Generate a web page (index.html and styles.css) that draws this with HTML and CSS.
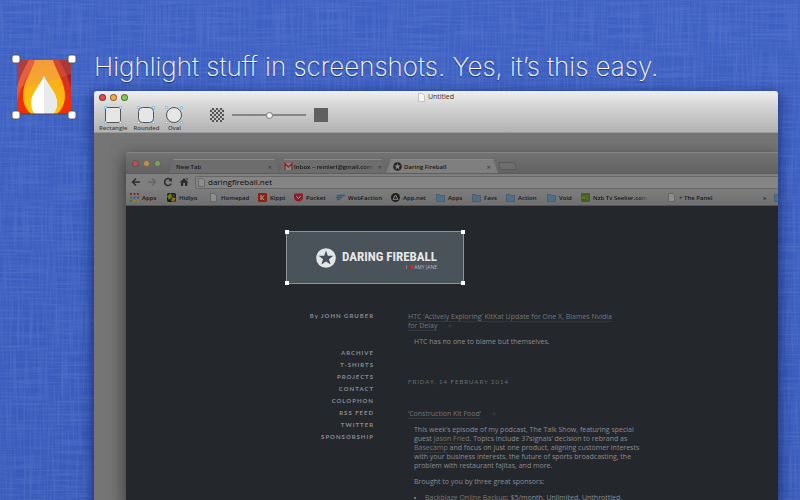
FILE: index.html
```html
<!DOCTYPE html>
<html lang="en">
<head>
<meta charset="utf-8">
<title>Highlight stuff in screenshots</title>
<meta name="viewport" content="width=device-width, initial-scale=1">
<link rel="stylesheet" href="styles.css">
</head>
<body>
<svg class="fabric" aria-hidden="true" preserveAspectRatio="none">
  <filter id="weft" x="0" y="0" width="100%" height="100%"><feTurbulence type="fractalNoise" baseFrequency="0.02 0.5" numOctaves="2" seed="3"/><feColorMatrix values="0 0 0 0 0.6  0 0 0 0 0.75  0 0 0 0 1  2 0 0 0 -0.8"/></filter>
  <filter id="warp" x="0" y="0" width="100%" height="100%"><feTurbulence type="fractalNoise" baseFrequency="0.5 0.02" numOctaves="2" seed="8"/><feColorMatrix values="0 0 0 0 0.6  0 0 0 0 0.75  0 0 0 0 1  2 0 0 0 -0.8"/></filter>
  <rect width="100%" height="100%" filter="url(#weft)"/>
  <rect width="100%" height="100%" filter="url(#warp)"/>
</svg>
<main class="page">
  <svg class="app-icon" viewBox="0 0 66 66" role="img" aria-label="App icon">
    <defs>
      <clipPath id="sq"><rect x="6" y="6" width="54" height="54"/></clipPath>
      <linearGradient id="gold" x1="0" y1="0" x2="0" y2="1"><stop offset="0" stop-color="#f9a22c"/><stop offset="1" stop-color="#ffc400"/></linearGradient>
    </defs>
    <g clip-path="url(#sq)">
      <rect x="6" y="6" width="54" height="54" fill="#ee3008"/>
      <path d="M6 6h17Q9 19 6 34z" fill="#9c2a34"/>
      <path d="M60 6H43q14 13 17 28z" fill="#9c2228"/>
      <path d="M18 6Q9 21 6 34v14q3-16 20-42z" fill="#e9552f"/>
      <path d="M48 6Q57 21 60 34v14Q57 32 40 6z" fill="#cf3426"/>
      <path d="M24 6C21 17 12 28 12 42q0 11 8 18h26q8-7 8-18C54 28 45 17 42 6z" fill="url(#gold)"/>
      <path d="M6 33Q36 30 60 20V6H6z" fill="#e08a70" opacity=".22"/>
      <path d="M33 22C28 33 20 39 20 49q0 7 4 11h18q4-4 4-11C46 39 38 33 33 22z" fill="#fff"/>
      <path d="M33 22v38h9q4-4 4-11C46 39 38 33 33 22z" fill="#e9eaec"/>
    </g>
    <path d="M7 60h52" stroke="#4b4650" stroke-width="1"/>
    <g fill="#fff" stroke="#555a66" stroke-width="1"><rect x="1" y="1" width="8" height="8" rx="2"/><rect x="57" y="1" width="8" height="8" rx="2"/><rect x="1" y="57" width="8" height="8" rx="2"/><rect x="57" y="57" width="8" height="8" rx="2"/></g>
  </svg>
  <h1>Highlight stuff in screenshots. Yes, it’s this easy.</h1>
  <section class="window" aria-label="Untitled">
    <header class="window-bar">
      <div class="title-row">
        <div class="lights"><button class="light red" aria-label="Close"></button><button class="light amber" aria-label="Minimize"></button><button class="light green" aria-label="Zoom"></button></div>
        <h2><svg class="doc" viewBox="0 0 7 9" aria-hidden="true"><path d="M.5.5h4l2 2v6h-6z"/></svg>Untitled</h2>
      </div>
      <div class="tools">
        <button class="tool"><svg viewBox="0 0 18 18" aria-hidden="true"><rect class="shape" x="1.5" y="1.5" width="15" height="15"/><g class="dots"><circle cx="1.5" cy="1.5" r="1.2"/><circle cx="16.5" cy="1.5" r="1.2"/><circle cx="1.5" cy="16.5" r="1.2"/><circle cx="16.5" cy="16.5" r="1.2"/></g></svg>Rectangle</button>
        <button class="tool"><svg viewBox="0 0 18 18" aria-hidden="true"><rect class="shape" x="1.5" y="1.5" width="15" height="15" rx="4"/><g class="dots"><circle cx="1.5" cy="1.5" r="1.2"/><circle cx="16.5" cy="1.5" r="1.2"/><circle cx="1.5" cy="16.5" r="1.2"/><circle cx="16.5" cy="16.5" r="1.2"/></g></svg>Rounded</button>
        <button class="tool"><svg viewBox="0 0 18 18" aria-hidden="true"><circle class="shape" cx="9" cy="9" r="7.5"/><g class="dots"><circle cx="1.5" cy="1.5" r="1.2"/><circle cx="16.5" cy="1.5" r="1.2"/><circle cx="1.5" cy="16.5" r="1.2"/><circle cx="16.5" cy="16.5" r="1.2"/></g></svg>Oval</button>
        <div class="opacity">
          <span class="checker"></span>
          <input type="range" min="0" max="100" value="50" aria-label="Dim opacity">
          <span class="solid"></span>
        </div>
      </div>
    </header>
    <div class="canvas">
      <div class="browser">
        <div class="tab-strip">
          <div class="lights"><button class="light red" aria-label="Close"></button><button class="light amber" aria-label="Minimize"></button><button class="light green" aria-label="Zoom"></button></div>
          <button class="tab first"><span>New Tab</span><i>×</i></button>
          <button class="tab second"><svg viewBox="0 0 9 8" aria-hidden="true"><rect x=".5" y=".5" width="8" height="7" fill="#888"/><path d="M1 7.500V1l3.500 3.500L8 1v6.500" fill="none" stroke="#8e2520" stroke-width="1.300"/></svg><span class="fade">Inbox – reinierl@gmail.com</span><i>×</i></button>
          <button class="tab active"><svg viewBox="0 0 9 9" aria-hidden="true"><circle cx="4.500" cy="4.500" r="4.300" fill="#222529"/><path d="M4.500 1.200l.8 2.300h2.400l-1.900 1.500.7 2.400-2-1.400-2 1.400.7-2.400-1.900-1.500h2.400z" fill="#8a8a8a"/></svg><span>Daring Fireball</span><i>×</i></button>
          <button class="new-tab" aria-label="Open new tab"></button>
        </div>
        <div class="nav">
          <button aria-label="Back"><svg viewBox="0 0 10 10"><path d="M9 5H2M5 1.500L1.500 5 5 8.500" class="ink"/></svg></button>
          <button aria-label="Forward" class="off"><svg viewBox="0 0 10 10"><path d="M1 5h7M5 1.500L8.500 5 5 8.500" class="ink"/></svg></button>
          <button aria-label="Reload"><svg viewBox="0 0 10 10"><path d="M8.300 6.500A3.500 3.500 0 1 1 7.500 2.500" class="ink"/><path d="M5.500 4.200H9V.7z" fill="#2e2e2e"/></svg></button>
          <button aria-label="Home"><svg viewBox="0 0 10 10"><path d="M5 1l4.500 4.500H8.300V9H6V6H4.200v3H2V5.500H.5zM7 1h1.500v3z" fill="#2e2e2e"/></svg></button>
          <label class="address"><svg class="doc" viewBox="0 0 7 9" aria-hidden="true"><path d="M.5.5h4l2 2v6h-6z"/></svg><input type="text" value="daringfireball.net" aria-label="Address"></label>
        </div>
        <nav class="bookmarks">
          <a href="#"><svg viewBox="0 0 9 9"><g fill="#8b2a25"><path d="M0 0h2v2H0zM3.500 0h2v2h-2zM7 0h2v2H7z"/></g><path d="M0 3.500h2v2H0zM0 7h2v2H0z" fill="#2f7a40"/><path d="M3.500 3.500h2v2h-2zM7 3.500h2v2H7z" fill="#2e5f94"/><path d="M3.500 7h2v2h-2zM7 7h2v2H7z" fill="#a08020"/></svg>Apps</a>
          <a href="#"><svg viewBox="0 0 9 9"><rect width="9" height="9" rx="2" fill="#191b12"/><path d="M0 3l4-3 1 4-3 3z" fill="#6d7d18"/><path d="M5 4l4 1-2 4-3-1z" fill="#8c6b18"/><path d="M5 1l3 1-1 2z" fill="#2c6a3a"/></svg>Hidiyo</a>
          <a href="#"><svg class="doc" viewBox="0 0 7 9"><path d="M.5.5h4l2 2v6h-6z"/></svg>Homepad</a>
          <a href="#"><svg viewBox="0 0 9 9"><rect width="9" height="9" rx="1" fill="#8e1f10"/><path d="M3 2v5M6.300 2.500L3.500 4.800 6.300 7" stroke="#aaa" fill="none"/></svg>Kippt</a>
          <a href="#"><svg viewBox="0 0 9 9"><path d="M1 .5h7q1 0 1 1V4q0 4-4.500 4.500Q0 8 0 4V1.500q0-1 1-1z" fill="#8e1a2c"/><path d="M2.300 3.200l2.200 2.100 2.200-2.100" stroke="#aaa" fill="none"/></svg>Pocket</a>
          <a href="#"><svg viewBox="0 0 9 9"><path d="M1 2.500h8M0 4.500h6M1 6.500h3" stroke="#285a86" stroke-width="1.300"/></svg>WebFaction</a>
          <a href="#"><svg viewBox="0 0 9 9"><circle cx="4.500" cy="4.500" r="4.500" fill="#202020"/><path d="M2 6.300L4.500 2 7 6.300z" fill="none" stroke="#888"/></svg>App.net</a>
          <a href="#"><svg class="folder" viewBox="0 0 9 9"><path d="M.5 1.500h3l1 1h4v6h-8z"/></svg>Apps</a>
          <a href="#"><svg class="folder" viewBox="0 0 9 9"><path d="M.5 1.500h3l1 1h4v6h-8z"/></svg>Favs</a>
          <a href="#"><svg class="folder" viewBox="0 0 9 9"><path d="M.5 1.500h3l1 1h4v6h-8z"/></svg>Action</a>
          <a href="#"><svg class="folder" viewBox="0 0 9 9"><path d="M.5 1.500h3l1 1h4v6h-8z"/></svg>Void</a>
          <a href="#"><svg viewBox="0 0 9 9"><rect width="9" height="9" rx="1" fill="#42611a"/><path d="M1.500 6V3l2 3V3M5 3h2L5 6h2" stroke="#668436" fill="none" stroke-width=".7"/></svg><span class="fade">Nzb Tv Seeker.com</span></a>
          <a href="#"><svg class="doc" viewBox="0 0 7 9"><path d="M.5.5h4l2 2v6h-6z"/></svg>+ The Panel</a>
          <a href="#">»</a>
          <a href="#" aria-label="More"><svg class="folder" viewBox="0 0 9 9"><path d="M.5 1.500h3l1 1h4v6h-8z"/></svg></a>
        </nav>
        <div class="site">
          <div class="selection">
            <svg class="star" viewBox="0 0 20 20" aria-hidden="true"><circle cx="10" cy="10" r="9.800" fill="#e4e5e6"/><path d="M10 2.500l1.800 5.300h5.600L13 11.200l1.600 5.400L10 13.400l-4.600 3.200L7 11.200 2.600 7.800h5.600z" fill="#485059"/></svg>
            <div class="wordmark"><strong>DARING FIREBALL</strong><small>I <b>♥</b> AMY JANE</small></div>
            <span class="handle nw"></span><span class="handle ne"></span><span class="handle sw"></span><span class="handle se"></span>
          </div>
          <div class="columns">
            <aside>
              <p>By JOHN GRUBER</p>
              <ul><li><a href="#">ARCHIVE</a></li><li><a href="#">T-SHIRTS</a></li><li><a href="#">PROJECTS</a></li><li><a href="#">CONTACT</a></li><li><a href="#">COLOPHON</a></li><li><a href="#">RSS FEED</a></li><li><a href="#">TWITTER</a></li><li><a href="#">SPONSORSHIP</a></li></ul>
            </aside>
            <article>
              <h3><a href="#">HTC ‘Actively Exploring’ KitKat Update for One X, Blames Nvidia<br>for Delay</a><span>★</span></h3>
              <div class="entry"><p>HTC has no one to blame but themselves.</p></div>
              <h4>FRIDAY, 14 FEBRUARY 2014</h4>
              <h3><a href="#">‘Construction Kit Food’</a><span>★</span></h3>
              <div class="entry">
                <p>This week’s episode of my podcast, The Talk Show, featuring special<br>guest <a href="#">Jason Fried</a>. Topics include 37signals’ decision to rebrand as<br><a href="#">Basecamp</a> and focus on just one product, aligning customer interests<br>with your business interests, the future of sports broadcasting, the<br>problem with restaurant fajitas, and more.</p>
                <p>Brought to you by three great sponsors:</p>
                <ul><li><a href="#">Backblaze Online Backup</a>: $5/month. Unlimited. Unthrottled.</li></ul>
              </div>
            </article>
          </div>
        </div>
      </div>
    </div>
  </section>
</main>
</body>
</html>
```
FILE: styles.css
```css
* { box-sizing: border-box; }
body {
  margin: 0;
  height: 100vh;
  overflow: hidden;
  position: relative;
  background: linear-gradient(#3d60c3, #395aba);
  font-family: "Open Sans", "Noto Sans", sans-serif;
}
h1, h2, h3, h4, p, ul { margin: 0; padding: 0; font-weight: inherit; }
button {
  border: 0;
  padding: 0;
  background: none;
  font: inherit;
  color: inherit;
}
a { color: inherit; text-decoration: none; }
svg { display: block; flex: none; }
.fabric {
  position: absolute;
  inset: 0;
  width: 100%;
  height: 100%;
  opacity: 0.13;
}
.page {
  position: relative;
  height: 100%;
  display: grid;
  grid-template-columns: 94px minmax(0, 1fr);
  grid-template-rows: auto minmax(0, 1fr);
  padding-right: 22px;
}
.app-icon {
  grid-row: 1 / 3;
  width: 66px;
  height: 66px;
  margin: 54px 0 0 11px;
}
h1 {
  margin: 49px 0 6px;
  font: 200 26px/36px Inter, "Liberation Sans", sans-serif;
  color: #fff;
  white-space: nowrap;
  text-shadow: 0 1px 1px #1a2f78;
}
.window {
  display: flex;
  flex-direction: column;
  border-radius: 3px 3px 0 0;
  box-shadow: 0 4px 12px 3px rgba(10, 25, 90, 0.6);
}
.window-bar {
  padding: 0 5px;
  height: 42px;
  border-radius: 3px 3px 0 0;
  border-bottom: 1px solid #999;
  background: linear-gradient(#efefef, #d6d6d6 35%, #b2b2b2);
  color: #444;
}
.title-row {
  display: grid;
  grid-template-columns: 1fr auto 1fr;
  align-items: center;
  height: 12px;
}
.lights { display: flex; gap: 4px; }
.light {
  width: 7px;
  height: 7px;
  border-radius: 50%;
  border: 1px solid rgba(50, 30, 20, 0.5);
}
.red { background: #e14a4d; }
.amber { background: #eeae45; }
.green { background: #83c660; }
h2 {
  display: flex;
  align-items: center;
  gap: 3px;
  font-size: 7px;
  line-height: 12px;
  color: #333;
}
.doc { width: 7px; height: 9px; fill: #f4f4f4; stroke: #aaa; stroke-width: 0.6; }
.tools { display: flex; gap: 6px; padding-top: 3px; }
.tool {
  display: flex;
  flex-direction: column;
  align-items: center;
  font-size: 6px;
  font-weight: 600;
  line-height: 8px;
}
.tool svg { width: 18px; height: 18px; }
.shape { fill: #e6e6e6; stroke: #555; }
.dots { fill: #fff; stroke: #4aa5de; stroke-width: 0.8; }
.opacity {
  display: flex;
  align-items: center;
  gap: 8px;
  height: 18px;
  margin-left: 21px;
}
.checker {
  width: 14px;
  height: 14px;
  background: repeating-conic-gradient(#555 0 25%, #c4c4c4 0 50%) 0 0 / 4px 4px;
}
.solid { width: 14px; height: 14px; background: #606060; }
.opacity input {
  appearance: none;
  width: 74px;
  height: 8px;
  margin: 0;
  background: linear-gradient(#858585, #858585) center / 100% 2px no-repeat;
}
.opacity input::-webkit-slider-thumb {
  appearance: none;
  width: 7px;
  height: 7px;
  border: 1px solid #777;
  border-radius: 50%;
  background: #f4f4f4;
}
.canvas {
  flex: 1;
  min-height: 0;
  padding: 19px 0 0 32px;
  overflow: hidden;
  background: #757575;
}
.browser {
  height: 100%;
  display: flex;
  flex-direction: column;
  border-radius: 3px 0 0 0;
  box-shadow: 0 6px 16px 2px rgba(0, 0, 0, 0.5);
  background: #7c7c7c;
  color: #161616;
}
.tab-strip {
  display: flex;
  align-items: flex-end;
  height: 22px;
  padding-left: 6px;
  border-top: 1px solid #858585;
  border-bottom: 1px solid #5c5c5c;
  border-radius: 3px 0 0 0;
  background: linear-gradient(#727272, #626262);
  font-size: 6px;
  font-weight: 600;
}
.browser .light { opacity: 0.6; }
.tab-strip .lights { align-self: center; width: 37px; }
.tab {
  display: flex;
  align-items: center;
  gap: 2px;
  height: 14px;
  padding: 0 7px;
  background: #6d6d6d;
  border-top: 1px solid #8a8a8a;
  clip-path: polygon(5px 0, calc(100% - 5px) 0, 100% 100%, 0 100%);
}
.tab span { flex: 1; text-align: left; white-space: nowrap; }
.tab i { font-style: normal; font-size: 8px; font-weight: 400; color: #3c3c3c; }
.tab svg { width: 9px; height: 9px; }
.first { width: 110px; }
.second { width: 107px; padding: 0 4px 0 5px; gap: 1px; }
.active { width: 112px; background: #7f7f7f; }
.fade {
  mask-image: linear-gradient(90deg, #000 85%, transparent);
}
.new-tab {
  align-self: center;
  width: 17px;
  height: 8px;
  margin: 5px 0 0 1px;
  border: 1px solid #595959;
  border-radius: 2px;
  background: #6e6e6e;
  transform: skewX(15deg);
}
.nav {
  display: flex;
  align-items: center;
  gap: 6px;
  height: 16px;
  padding-left: 5px;
  background: #7f7f7f;
}
.nav button svg { width: 10px; height: 10px; }
.ink { fill: none; stroke: #2e2e2e; stroke-width: 1.5; }
.off { opacity: 0.3; }
.address {
  flex: 1;
  display: flex;
  align-items: center;
  gap: 3px;
  height: 13px;
  padding-left: 2px;
  border: 1px solid #666;
  border-right: 0;
  border-radius: 2px 0 0 2px;
  background: #858585;
}
.address input {
  flex: 1;
  min-width: 0;
  height: 11px;
  padding: 0 0 1px;
  border: 0;
  background: none;
  font: 8px/10px "Open Sans", "Noto Sans", sans-serif;
  color: #0a0a0a;
}
.browser .doc { fill: #8d8d8d; stroke: #555; }
.bookmarks {
  display: grid;
  grid-template-columns: 37px 42px 49px 36px 42px 55px 45px 36px 34px 41px 34px 86px minmax(0, 1fr) 11px 4px;
  align-items: center;
  height: 16px;
  padding-left: 4px;
  border-bottom: 1px solid #50555a;
  background: linear-gradient(#7c7c7c, #707070);
  font-size: 6px;
  font-weight: 600;
  line-height: 12px;
  white-space: nowrap;
}
.bookmarks a { display: flex; align-items: center; gap: 3px; overflow: hidden; }
.bookmarks svg { width: 9px; height: 9px; }
.folder { fill: #4e6f88; stroke: #39536a; stroke-width: 0.6; }
.site {
  flex: 1;
  min-height: 0;
  overflow: hidden;
  padding-top: 25px;
  background: #24272b;
  color: #8b8d90;
}
.selection {
  position: relative;
  display: flex;
  align-items: center;
  gap: 6px;
  width: 178px;
  height: 53px;
  margin-left: 160px;
  padding-left: 29px;
  border: 1px solid #8e9398;
  background: #4a525a;
  color: #e6e7e8;
}
.star { width: 20px; height: 20px; }
.wordmark {
  display: flex;
  flex-direction: column;
  align-items: flex-end;
  padding-top: 4px;
  white-space: nowrap;
}
.wordmark strong {
  font: 700 13px/14px "Roboto Condensed", "Liberation Sans Narrow", "DejaVu Sans Condensed", sans-serif;
}
.wordmark small { font: 5px/6px "Open Sans", sans-serif; color: #b9bcc0; }
.wordmark b { font-family: "DejaVu Sans", sans-serif; color: #e01b1b; }
.handle { position: absolute; width: 4px; height: 4px; background: #fff; }
.nw { top: -2px; left: -2px; }
.ne { top: -2px; right: -2px; }
.sw { bottom: -2px; left: -2px; }
.se { bottom: -2px; right: -2px; }
.columns {
  display: grid;
  grid-template-columns: 248px minmax(0, 1fr);
  gap: 34px;
  margin-top: 26px;
}
aside {
  font: bold 6px/12px Lato, sans-serif;
  letter-spacing: 1px;
  text-align: right;
}
aside ul { margin-top: 25px; list-style: none; }
article { font-size: 7px; line-height: 9px; padding-top: 2px; white-space: nowrap; }
h3 { font-size: 7px; }
article h3 a, .entry a { border-bottom: 1px solid #34373b; color: #74777a; }
h3 span { margin-left: 10px; color: #34373b; }
h4 {
  margin: 31px 0 23px;
  font: 6px/9px Lato, sans-serif;
  letter-spacing: 1px;
  color: #6a6d70;
}
.entry { padding-left: 6px; }
.entry p { margin-top: 7px; }
.entry ul { margin: 7px 0 0 11px; }
```
